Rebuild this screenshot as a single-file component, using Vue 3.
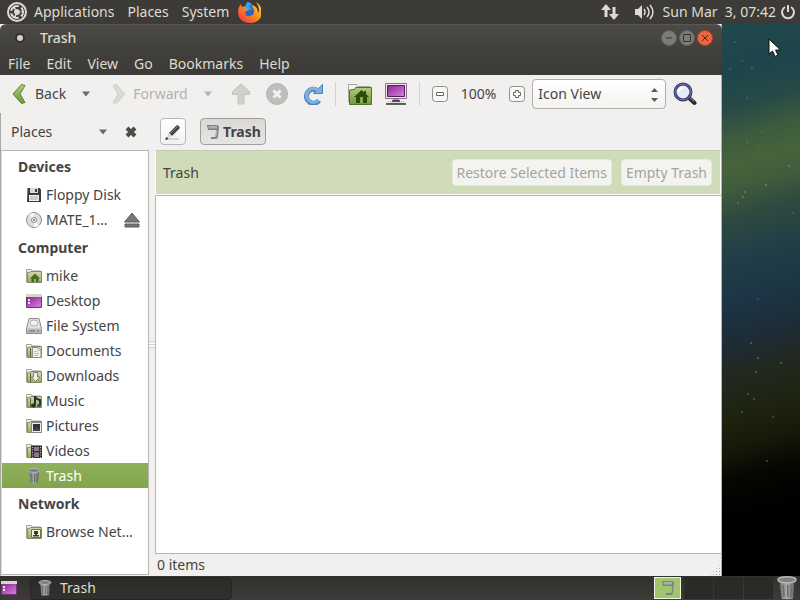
<script setup>
import { ref } from 'vue'

const panelMenus = ['Applications', 'Places', 'System']
const menus = ['File', 'Edit', 'View', 'Go', 'Bookmarks', 'Help']

const sections = [
  {
    title: 'Devices',
    items: [
      { name: 'Floppy Disk', icon: 'floppy' },
      { name: 'MATE_1…', icon: 'disc', eject: true },
    ]
  },
  {
    title: 'Computer',
    items: [
      { name: 'mike', icon: 'home' },
      { name: 'Desktop', icon: 'desktop' },
      { name: 'File System', icon: 'drive' },
      { name: 'Documents', icon: 'documents' },
      { name: 'Downloads', icon: 'downloads' },
      { name: 'Music', icon: 'music' },
      { name: 'Pictures', icon: 'pictures' },
      { name: 'Videos', icon: 'videos' },
      { name: 'Trash', icon: 'trash' },
    ]
  },
  {
    title: 'Network',
    items: [
      { name: 'Browse Net…', icon: 'network' },
    ]
  },
]

// x, y, opacity
const stars = [
  [13, 18, 0.2], [20, 37, 0.2], [8, 45, 0.25], [30, 44, 0.3], [25, 74, 0.2],
  [40, 108, 0.2], [25, 118, 0.2], [38, 122, 0.2], [67, 142, 0.4], [44, 161, 0.4],
  [23, 168, 0.4], [21, 173, 0.4], [16, 179, 0.3], [71, 189, 0.2], [36, 275, 0.2],
  [29, 319, 0.4], [36, 334, 0.4], [59, 339, 0.4], [34, 348, 0.4], [26, 370, 0.3],
  [32, 375, 0.3], [20, 388, 0.3], [51, 393, 0.3], [45, 437, 0.4],
]

const place = ref('Trash')
const view = ref('Icon View')
const workspace = ref(1)
</script>

<template>
  <div class="screen">
    <svg class="sprite" width="0" height="0" aria-hidden="true">
      <defs>
        <linearGradient id="gGreen" x1="0" y1="0" x2="0" y2="1">
          <stop offset="0" stop-color="#b4cb7c" />
          <stop offset="1" stop-color="#71963c" />
        </linearGradient>
        <linearGradient id="gFolder" x1="0" y1="0" x2="0" y2="1">
          <stop offset="0" stop-color="#d3ddb0" />
          <stop offset="1" stop-color="#93ab62" />
        </linearGradient>
        <linearGradient id="gPurple" x1="0" y1="0" x2="1" y2="1">
          <stop offset="0" stop-color="#8c2a92" />
          <stop offset="1" stop-color="#d77fdc" />
        </linearGradient>
        <linearGradient id="gTrash" x1="0" y1="0" x2="1" y2="0">
          <stop offset="0" stop-color="#6d7372" />
          <stop offset="0.5" stop-color="#a9adac" />
          <stop offset="1" stop-color="#626766" />
        </linearGradient>
        <linearGradient id="gFox" x1="1" y1="0" x2="0" y2="1">
          <stop offset="0" stop-color="#ffe23a" />
          <stop offset="0.45" stop-color="#ff8d1c" />
          <stop offset="1" stop-color="#ed2a4c" />
        </linearGradient>
      </defs>

      <symbol id="folder" viewBox="0 0 16 16">
        <path d="M.5 14.500V1.500h5l1 1.500h8v2" fill="#f5f5ef" stroke="#a3a798" />
        <path d="M1.500 14.500V4.500l3-.5.500-.5h10.500v11z" fill="url(#gFolder)" stroke="#7f8b60" />
      </symbol>
      <symbol id="home" viewBox="0 0 16 16">
        <use href="#folder" />
        <path d="M9 5.500 4 10.500h1.500V14h7v-3.500H14z" fill="#476b20" />
        <path d="M8 11h2v3H8z" fill="#9ab75c" />
      </symbol>
      <symbol id="documents" viewBox="0 0 16 16">
        <use href="#folder" />
        <path d="M4.500 5v9" stroke="#5e6b3f" />
        <path d="M6.500 4.500h6l2.500 2.500v7.500H6.500z" fill="#f2f3ee" stroke="#8a8f80" />
        <path d="M12 4.500v3h3M8 8.500h3M8 10.500h5M8 12.500h4" fill="none" stroke="#b9bdb1" />
      </symbol>
      <symbol id="downloads" viewBox="0 0 16 16">
        <use href="#folder" />
        <path d="M4.500 5v9" stroke="#5e6b3f" />
        <path d="M7.500 4.500h4V9h2.500l-4.500 4.500L5.500 9h2z" fill="#f1f2ee" stroke="#7f8476" />
      </symbol>
      <symbol id="music" viewBox="0 0 16 16">
        <use href="#folder" />
        <path d="M4.500 5v9" stroke="#5e6b3f" />
        <path d="M9 3v8M9 4q1 2 5 3v5" fill="none" stroke="#263031" stroke-width="2" />
        <ellipse cx="7.500" cy="12.500" rx="2.500" ry="2" fill="#263031" />
        <ellipse cx="13" cy="12.500" rx="2" ry="1.500" fill="#3d4b42" />
      </symbol>
      <symbol id="pictures" viewBox="0 0 16 16">
        <use href="#folder" />
        <path d="M5.500 4.500h10v10h-10z" fill="#f0f0ea" stroke="#85887f" />
        <path d="M7 6h7v7H7z" fill="#2e333b" />
        <path d="M7 11l3-2 4 2v2H7z" fill="#3d444e" />
      </symbol>
      <symbol id="videos" viewBox="0 0 16 16">
        <use href="#folder" />
        <path d="M5 2.500h11V15H5z" fill="#3a3037" />
        <path d="M8 4h5v4H8zM8 9.500h5V14H8z" fill="#8d7c87" />
        <path d="M6.500 4v11M14.500 4v11" stroke="#c9c3c7" stroke-dasharray="1 1.500" />
      </symbol>
      <symbol id="network" viewBox="0 0 16 16">
        <use href="#folder" />
        <path d="M5.500 5.500h9v8h-9z" fill="#eef1e3" stroke="#637a38" />
        <path d="M8 7h4v3H8zM9 10h2v1h2v1.500H7V11h2z" fill="#35402a" />
      </symbol>
      <symbol id="desktop" viewBox="0 0 16 16">
        <path d="M.5 1.500h15v13H.5z" fill="#a034a8" stroke="#6f3675" />
        <path d="M1 4.500h14V14H1z" fill="url(#gPurple)" />
        <path d="M0 1h16v3H0z" fill="#d9d5cd" />
        <path d="M2 6h2v2H2zM2 9h2v2H2z" fill="#f3dcf4" />
      </symbol>
      <symbol id="floppy" viewBox="0 0 16 16">
        <path d="M1.500 1h12L15 2.500V15H1z" fill="#393b3c" />
        <path d="M4 1h8v5H4z" fill="#d9dbda" />
        <path d="M9 2h2v3H9z" fill="#393b3c" />
        <path d="M3 8h10v6H3z" fill="#f0f0ee" />
        <path d="M4 10h8M4 12h8" stroke="#a5a7a6" />
      </symbol>
      <symbol id="disc" viewBox="0 0 16 16">
        <circle cx="8" cy="8" r="7.500" fill="#dcdddc" stroke="#8c8f8d" />
        <path d="M8 8 3 2.500A7 7 0 0 1 8 1zM8 8l5 5.500A7 7 0 0 1 8 15z" fill="#f8f8f8" />
        <circle cx="8" cy="8" r="2.500" fill="#f7f7f7" stroke="#8c8f8d" />
        <circle cx="8" cy="8" r="1" fill="#777" />
      </symbol>
      <symbol id="drive" viewBox="0 0 16 16">
        <path d="M3 .5h10l2.500 10v5H.5v-5z" fill="#e0e1e0" stroke="#8b8e8c" />
        <ellipse cx="8" cy="5" rx="4" ry="3" fill="#f4f4f4" stroke="#b0b2b1" />
        <path d="M1 10.500h14V15H1z" fill="#b9bbba" />
        <path d="M3 13h6M11 13h2" stroke="#686b69" />
      </symbol>
      <symbol id="trash" viewBox="0 0 16 16">
        <path d="M3 3h10l-1 12.500H4.500z" fill="url(#gTrash)" />
        <path d="M5.500 6l.5 8M8.500 6v8M11 6l-.5 8" stroke="#6a6f6e" />
        <ellipse cx="8" cy="2.500" rx="6" ry="2" fill="#7d8284" stroke="#b4b7b6" />
      </symbol>
      <symbol id="trash-open" viewBox="0 0 16 16">
        <path d="M2 1h8q3 0 4 1l-1 11q-.5 2-3 2H6v-2h4.500l.5-7H3z" fill="#7b8180" />
        <path d="M3 2h9v2.500H4z" fill="#a9aeb0" />
        <path d="M12 6l-1 7" stroke="#b2b6b5" />
      </symbol>
      <symbol id="caret" viewBox="0 0 8 6">
        <path d="M0 .5h8L4 5.500z" fill="currentColor" />
      </symbol>
    </svg>

    <header class="panel top-panel">
      <svg width="20" height="20" viewBox="0 0 20 20" aria-hidden="true">
        <circle cx="10" cy="10" r="10" fill="#dedbd3" />
        <circle cx="10" cy="10" r="7.500" fill="none" stroke="#3c3b37" />
        <circle cx="10" cy="10" r="4" fill="none" stroke="#3c3b37" stroke-width="2" stroke-dasharray="7 1.400" />
        <g fill="#3c3b37">
          <circle cx="4" cy="10" r="1.500" />
          <circle cx="13" cy="4.800" r="1.500" />
          <circle cx="13" cy="15.200" r="1.500" />
        </g>
      </svg>
      <nav class="panel-menus">
        <button v-for="m in panelMenus" :key="m" type="button">{{ m }}</button>
      </nav>
      <button class="launcher" type="button" aria-label="Firefox">
        <svg width="24" height="24" viewBox="0 0 24 24">
          <circle cx="12" cy="12" r="8" fill="#2b63c8" />
          <path d="M10 2q3 0 5 2-3 1-2 3l2 3q-3-1-4 1l-4-1z" fill="#2fa4ea" />
          <path d="M4 4q0 2 1 3 2-1 4 0 0 2 2 3-3 1-3 3 1 4 5 3 5-1 4-6-1-3-3-5 7 1 7 8 3-4-2-11 6 4 6 11-1 9-11 10Q2 23 1 13 1 7 4 4z" fill="url(#gFox)" />
        </svg>
      </button>
      <div class="tray">
        <svg width="18" height="18" viewBox="0 0 18 18" aria-label="Network">
          <path d="M5 1 0 7h3.500v7h3V7H10zM13 17l5-6h-3.500V4h-3v7H8z" fill="#dfdbd2" />
        </svg>
        <svg class="volume" width="20" height="16" viewBox="0 0 20 16" aria-label="Volume">
          <path d="M0 5h3l4-4v14l-4-4H0z" fill="#dfdbd2" />
          <path d="M9 5q2 3 0 6M12 3q4 5 0 10M15 1q6 7 0 14" fill="none" stroke="#dfdbd2" stroke-width="1.500" />
        </svg>
        <time>Sun Mar &nbsp;3, 07:42</time>
        <svg width="16" height="16" viewBox="0 0 16 16" aria-label="Power">
          <path d="M5 3a6 6 0 1 0 6 0M8 1v7" fill="none" stroke="#dfdbd2" stroke-width="2" />
        </svg>
      </div>
    </header>

    <main class="desktop">
      <section class="window">
        <div class="titlebar">
          <svg width="14" height="14" viewBox="0 0 14 14" aria-hidden="true">
            <circle cx="7" cy="7" r="5.500" fill="#33322f" stroke="#4c4b47" />
            <circle cx="7" cy="7" r="3" fill="#d5d2c9" />
          </svg>
          <h1>Trash</h1>
          <div class="window-buttons">
            <button type="button" aria-label="Minimize">
              <svg width="16" height="16" viewBox="0 0 16 16">
                <circle cx="8" cy="8" r="7.500" fill="#7d7b76" stroke="#62605b" />
                <path d="M5 8h6" stroke="#33322e" />
              </svg>
            </button>
            <button type="button" aria-label="Maximize">
              <svg width="16" height="16" viewBox="0 0 16 16">
                <circle cx="8" cy="8" r="7.500" fill="#7d7b76" stroke="#62605b" />
                <path d="M4.500 4.500h7v7h-7z" fill="none" stroke="#33322e" />
              </svg>
            </button>
            <button type="button" aria-label="Close">
              <svg width="16" height="16" viewBox="0 0 16 16">
                <circle cx="8" cy="8" r="7.500" fill="#ee6543" stroke="#b84422" />
                <path d="M5 5l6 6M11 5l-6 6" stroke="#4b2418" />
              </svg>
            </button>
          </div>
        </div>

        <nav class="menubar">
          <button v-for="m in menus" :key="m" type="button">{{ m }}</button>
        </nav>

        <div class="toolbar">
          <button class="tool back" type="button">
            <svg width="14" height="22" viewBox="0 0 14 22">
              <path d="M9.500 1.500 1 11l8.500 9.500 3.500-1L8 11l5-8.500z" fill="url(#gGreen)" stroke="#5f7f34" stroke-linejoin="round" />
            </svg>
            Back
          </button>
          <button class="drop" type="button" aria-label="Back history">
            <svg width="8" height="6"><use href="#caret" /></svg>
          </button>
          <button class="tool forward" type="button" disabled>
            <svg width="14" height="22" viewBox="0 0 14 22">
              <path d="M4.500 1.500 13 11l-8.500 9.500-3.500-1L6 11 1 2.500z" fill="#dbdad8" stroke="#d0cfcc" stroke-linejoin="round" />
            </svg>
            Forward
          </button>
          <button class="drop faded" type="button" disabled aria-label="Forward history">
            <svg width="8" height="6"><use href="#caret" /></svg>
          </button>
          <div class="tool-icons">
            <button type="button" disabled aria-label="Up">
              <svg width="20" height="22" viewBox="0 0 20 22">
                <path d="M10 1 1.500 8.500v3H7V21h6v-9.500h5.500v-3z" fill="#d1d0ce" stroke="#c2c1be" stroke-linejoin="round" />
              </svg>
            </button>
            <button type="button" disabled aria-label="Stop">
              <svg width="22" height="22" viewBox="0 0 22 22">
                <circle cx="11" cy="11" r="10.500" fill="#bfbebc" stroke="#b4b3b0" />
                <path d="M7.500 7.500l7 7M14.500 7.500l-7 7" stroke="#f3f2f1" stroke-width="3" />
              </svg>
            </button>
            <button type="button" aria-label="Reload">
              <svg width="20" height="22" viewBox="0 0 20 22">
                <path d="M14.500 7.500A7 7 0 1 0 16 17.500" fill="none" stroke="#4a82bd" stroke-width="5" />
                <path d="M19.500 1.500v9h-9z" fill="#7fb0df" stroke="#4a82bd" stroke-linejoin="round" />
                <path d="M15 7A7 7 0 1 0 15.500 17.500" fill="none" stroke="#7fb0df" stroke-width="3" />
              </svg>
            </button>
          </div>
          <span class="separator"></span>
          <div class="tool-icons places-icons">
            <button type="button" aria-label="Home">
              <svg width="24" height="24" viewBox="0 0 24 24">
                <path d="M.5 20V2.500h8l1.500 2h12V8" fill="#f4f4f0" stroke="#a5a69c" />
                <path d="M1.500 22.500V8l5-.5 1-2h16v17z" fill="url(#gGreen)" stroke="#507525" />
                <path d="M13.500 8 6 15h2v6h11v-6h2l-3-3V9h-2v1.500z" fill="#294f0b" />
                <path d="M12 15h3v6h-3z" fill="#86aa50" />
              </svg>
            </button>
            <button type="button" aria-label="Computer">
              <svg width="22" height="24" viewBox="0 0 22 24">
                <path d="M.5 1.500h21v15H.5z" fill="#e9e7e8" stroke="#8c6e91" />
                <path d="M2.500 3.500h17v11h-17z" fill="url(#gPurple)" stroke="#571b60" />
                <path d="M8 17h6v2H8z" fill="#999" />
                <path d="M3 19h16l2 3H1z" fill="#d9dad9" />
                <path d="M1 22h20M7 19h8" stroke="#303331" stroke-width="1.500" />
              </svg>
            </button>
          </div>
          <span class="separator"></span>
          <div class="zoom">
            <button type="button" aria-label="Zoom out">
              <svg width="16" height="16" viewBox="0 0 16 16">
                <rect x=".5" y=".5" width="15" height="15" rx="3" fill="#f8f8f7" stroke="#8f8e8a" />
                <path d="M4.500 6.500h7v3h-7z" fill="#fff" stroke="#676662" />
              </svg>
            </button>
            <span>100%</span>
            <button type="button" aria-label="Zoom in">
              <svg width="16" height="16" viewBox="0 0 16 16">
                <rect x=".5" y=".5" width="15" height="15" rx="3" fill="#f8f8f7" stroke="#8f8e8a" />
                <path d="M6.500 4.500h3v2h2v3h-2v2h-3v-2h-2v-3h2z" fill="#fff" stroke="#676662" />
              </svg>
            </button>
          </div>
          <label class="view-select">
            <select v-model="view" aria-label="View mode">
              <option>Icon View</option>
              <option>List View</option>
              <option>Compact View</option>
            </select>
            <svg width="7" height="14" viewBox="0 0 7 14" aria-hidden="true">
              <path d="M0 4h7L3.500 0zM0 10h7L3.500 14z" fill="#5b5a57" />
            </svg>
          </label>
          <button class="search" type="button" aria-label="Search">
            <svg width="24" height="24" viewBox="0 0 24 24">
              <path d="M15 15l6.500 6" stroke="#2b2a2a" stroke-width="4" stroke-linecap="round" />
              <path d="M16 15l5 4.500" stroke="#94928a" />
              <circle cx="10" cy="10" r="8" fill="#e4ecf6" stroke="#35366f" stroke-width="3" />
              <circle cx="10" cy="10" r="8" fill="none" stroke="#7475b4" />
              <path d="M6 10q0-4 4-4" fill="none" stroke="#fff" stroke-width="2" />
            </svg>
          </button>
        </div>

        <div class="body">
          <aside class="sidebar">
            <div class="side-head">
              <button class="side-mode" type="button">
                Places
                <svg width="8" height="6"><use href="#caret" /></svg>
              </button>
              <button type="button" aria-label="Close side pane">
                <svg width="12" height="12" viewBox="0 0 12 12">
                  <path d="M2 2l8 8M10 2l-8 8" stroke="#4d4c49" stroke-width="4" />
                </svg>
              </button>
            </div>
            <div class="places">
              <template v-for="s in sections" :key="s.title">
                <h2>{{ s.title }}</h2>
                <ul>
                  <li
                    v-for="item in s.items"
                    :key="item.name"
                    :class="{ selected: item.name == place }"
                  >
                    <button class="place" type="button" @click="place = item.name">
                      <svg width="16" height="16"><use :href="'#' + item.icon" /></svg>
                      <span>{{ item.name }}</span>
                    </button>
                    <button v-if="item.eject" type="button" aria-label="Eject">
                      <svg width="16" height="16" viewBox="0 0 16 16">
                        <path d="M8 1 15.500 10H.5zM1 12h14v3H1z" fill="#777774" stroke="#5a5a57" />
                      </svg>
                    </button>
                  </li>
                </ul>
              </template>
            </div>
          </aside>

          <div class="splitter"><i></i></div>

          <div class="content">
            <div class="location">
              <button class="edit" type="button" aria-label="Edit location">
                <svg width="18" height="18" viewBox="0 0 18 18">
                  <path d="M3 16h12" stroke="#d5d4d2" stroke-width="2" />
                  <path d="M5 10 13 2q2 0 3 3l-8 8z" fill="#454443" />
                  <path d="M7 10l7-7" stroke="#8a8987" />
                  <path d="M5 10l3 3-6 3z" fill="#d8d5cc" />
                  <path d="M1 17l1.500-3 2 2z" fill="#222" />
                </svg>
              </button>
              <button class="crumb" type="button">
                <svg width="16" height="16"><use href="#trash-open" /></svg>
                Trash
              </button>
            </div>
            <div class="infobar">
              <span>Trash</span>
              <button type="button" disabled>Restore Selected Items</button>
              <button type="button" disabled>Empty Trash</button>
            </div>
            <div class="files"></div>
            <footer class="status">
              <span>0 items</span>
              <i class="grip"></i>
            </footer>
          </div>
        </div>
      </section>

      <div class="wallpaper">
        <svg width="79" height="552" viewBox="0 0 79 552" aria-hidden="true">
          <circle
            v-for="(s, i) in stars"
            :key="i"
            :cx="s[0]"
            :cy="s[1]"
            r="1"
            fill="#a8c8a0"
            :opacity="s[2]"
          />
        </svg>
        <svg class="cursor" width="14" height="20" viewBox="0 0 14 20" aria-hidden="true">
          <path d="M1 1v15l3.500-3 2.500 5.500 3-1.500-2.500-5h5z" fill="#fff" stroke="#111" />
        </svg>
      </div>
    </main>

    <footer class="panel bottom-panel">
      <button type="button" aria-label="Show desktop">
        <svg width="16" height="16"><use href="#desktop" /></svg>
      </button>
      <button class="task" type="button">
        <svg width="16" height="18"><use href="#trash" /></svg>
        Trash
      </button>
      <div class="workspaces">
        <button
          v-for="n in 4"
          :key="n"
          type="button"
          :class="{ active: n == workspace }"
          :aria-label="'Workspace ' + n"
          @click="workspace = n"
        >
          <svg v-if="n == 1" width="16" height="16"><use href="#trash-open" /></svg>
        </button>
      </div>
      <button class="panel-trash" type="button" aria-label="Trash">
        <svg width="24" height="24"><use href="#trash" /></svg>
      </button>
    </footer>
  </div>
</template>

<style>
body {
  background: #000;
}
</style>

<style scoped>
.screen {
  display: flex;
  flex-direction: column;
  height: 100vh;
  overflow: hidden;
  font-family: "Noto Sans", "Open Sans", sans-serif;
  font-size: 14px;
  line-height: 20px;
  color: #444;
}

.sprite {
  position: absolute;
}

* {
  box-sizing: border-box;
}

svg {
  display: block;
  flex: none;
}

button {
  display: flex;
  align-items: center;
  margin: 0;
  padding: 0;
  border: 0;
  background: none;
  color: inherit;
  font: inherit;
  white-space: nowrap;
}

h1, h2, ul {
  margin: 0;
  padding: 0;
  list-style: none;
}

/* panels */
.panel {
  display: flex;
  align-items: center;
  flex: none;
  height: 24px;
  background: #3c3b37;
  color: #dfdbd2;
}

.top-panel {
  padding: 0 4px 0 7px;
}

.panel-menus {
  display: flex;
  gap: 13px;
  margin-left: 7px;
}

.launcher {
  margin-left: 8px;
}

.tray {
  display: flex;
  align-items: center;
  margin-left: auto;
}

.volume {
  margin-left: 16px;
}

.tray time {
  margin: 0 4px 0 8px;
}

/* window */
.desktop {
  display: flex;
  flex: 1;
  min-height: 0;
}

.window {
  display: flex;
  flex-direction: column;
  flex: 1;
  min-width: 0;
  background: #f1f0ef;
  border-right: 1px solid #b4b3b0;
}

.titlebar {
  display: flex;
  align-items: center;
  height: 27px;
  padding: 0 9px 0 13px;
  border-top: 1px solid #5a5955;
  border-radius: 6px 6px 0 0;
  background: linear-gradient(#4b4a45, #403f3b);
  color: #dfdbd2;
}

.titlebar h1 {
  margin-left: 13px;
  font-size: 14px;
  font-weight: 500;
}

.window-buttons {
  display: flex;
  gap: 2px;
  margin-left: auto;
}

.menubar {
  display: flex;
  gap: 16px;
  height: 24px;
  padding: 1px 0 0 8px;
  background: linear-gradient(#403f3b, #3c3b37);
  color: #dfdbd2;
}

/* the dark frame runs down to the menubar only */
.titlebar,
.menubar {
  margin-right: -1px;
}

/* toolbar */
.toolbar {
  display: flex;
  align-items: center;
  height: 38px;
  padding-left: 12px;
}

.tool {
  gap: 9px;
}

.drop {
  margin-left: 16px;
  color: #6a6966;
}

.faded {
  color: #b3b2b0;
}

.forward {
  gap: 7px;
  margin-left: 22px;
  color: #b3b2b0;
}

.tool-icons {
  display: flex;
  align-items: center;
  gap: 15px;
  margin-left: 19px;
}

.separator {
  width: 1px;
  height: 24px;
  margin-left: 12px;
  background: #d6d4d2;
}

.places-icons {
  gap: 13px;
  margin-left: 12px;
}

.zoom {
  display: flex;
  align-items: center;
  gap: 13px;
  margin-left: 12px;
}

.view-select {
  position: relative;
  width: 134px;
  height: 30px;
  margin-left: 7px;
}

.view-select select {
  appearance: none;
  width: 100%;
  height: 100%;
  padding: 0 5px;
  border: 1px solid #b0aeab;
  border-radius: 4px;
  background: linear-gradient(#fff, #f4f3f2);
  color: inherit;
  font: inherit;
}

.view-select svg {
  position: absolute;
  top: 9px;
  right: 8px;
}

.search {
  margin-left: 7px;
}

/* side pane */
.body {
  display: flex;
  flex: 1;
  min-height: 0;
  border-left: 1px solid #a9a8a5;
}

.sidebar {
  display: flex;
  flex-direction: column;
  width: 148px;
}

.side-head {
  display: flex;
  align-items: center;
  height: 37px;
  padding: 0 12px 0 10px;
}

.side-mode {
  flex: 1;
  justify-content: space-between;
  margin-right: 18px;
}

.side-mode svg {
  color: #6a6966;
}

.places {
  flex: 1;
  margin-bottom: 1px;
  border: 1px solid #b8b6b3;
  border-left-color: #dcdbd9;
  background: #fff;
}

.places h2 {
  padding: 6px 0 5px 16px;
  font-size: 14px;
  line-height: 20px;
  font-weight: bold;
}

.places li {
  display: flex;
  align-items: center;
  height: 25px;
  padding: 0 8px 0 24px;
}

.places li.selected {
  background: linear-gradient(#8fb05b, #81a54c);
  color: #fff;
}

.place {
  flex: 1;
  gap: 4px;
  min-width: 0;
}

/* splitter grip */
.splitter {
  display: flex;
  align-items: center;
  width: 6px;
}

.splitter i {
  width: 6px;
  height: 8px;
  background: repeating-linear-gradient(#d0cfcc 0 1px, #fafafa 1px 3px);
}

/* content */
.content {
  display: flex;
  flex-direction: column;
  flex: 1;
  min-width: 0;
}

.location {
  display: flex;
  align-items: center;
  gap: 14px;
  height: 37px;
  padding-left: 5px;
}

.edit,
.crumb {
  height: 27px;
  border: 1px solid #b9b7b4;
  border-radius: 4px;
}

.edit {
  justify-content: center;
  width: 26px;
  background: linear-gradient(#fff, #f2f1f0);
}

.crumb {
  gap: 2px;
  padding: 0 4px;
  border-color: #a09e9b;
  background: linear-gradient(#dad9d7, #e6e5e4);
  font-weight: bold;
}

.infobar {
  display: flex;
  align-items: center;
  gap: 9px;
  height: 45px;
  padding: 0 8px 0 7px;
  border: 1px solid #fbfbf8;
  border-top-color: #c3cbb3;
  background: #cfdbb9;
}

.infobar span {
  flex: 1;
}

.infobar button {
  height: 27px;
  padding: 0 4px;
  border: 1px solid #e4ebd9;
  border-radius: 4px;
  background: #f3f4f0;
  color: #a3a4a0;
}

.files {
  flex: 1;
  border: 1px solid #b8b6b3;
  border-right: 0;
  background: #fff;
}

.status {
  display: flex;
  align-items: center;
  justify-content: space-between;
  height: 22px;
  padding-left: 2px;
}

.grip {
  align-self: flex-end;
  width: 12px;
  height: 12px;
  background: radial-gradient(circle, #a5a4a1 0 1px, transparent 1px) 0 0 / 3px 3px;
  clip-path: polygon(100% 0, 100% 100%, 0 100%);
}

/* wallpaper */
.wallpaper {
  position: relative;
  width: 78px;
  overflow: hidden;
  background: linear-gradient(165deg,
    #21484b 0%,
    #1e454c 9%,
    #274a47 15%,
    #3c5a3e 20%,
    #47633b 25%,
    #415c3d 29%,
    #304a3f 34%,
    #213f47 41%,
    #1c3545 49%,
    #1d2c36 56%,
    #22281f 62%,
    #1e230f 69%,
    #141808 75%,
    #050702 80%,
    #000 87%);
}

.cursor {
  position: absolute;
  top: 14px;
  left: 46px;
}

/* taskbar */
.bottom-panel {
  padding-left: 1px;
  background: linear-gradient(#32312e, #3c3b37);
}

.task {
  flex: none;
  gap: 7px;
  width: 202px;
  height: 23px;
  margin-left: 13px;
  padding-left: 6px;
  border: 1px solid #262522;
  border-radius: 4px;
  background: linear-gradient(#2b2a28, #32312e);
}

.workspaces {
  display: flex;
  gap: 1px;
  margin-left: auto;
}

.workspaces button {
  justify-content: center;
  width: 29px;
  height: 22px;
  background: #2a2a27;
}

.workspaces .active {
  width: 27px;
  margin-right: 2px;
  border: 1px solid #eef3e2;
  background: #a2c46d;
}

.panel-trash {
  margin: 0 1px 0 2px;
}
</style>
